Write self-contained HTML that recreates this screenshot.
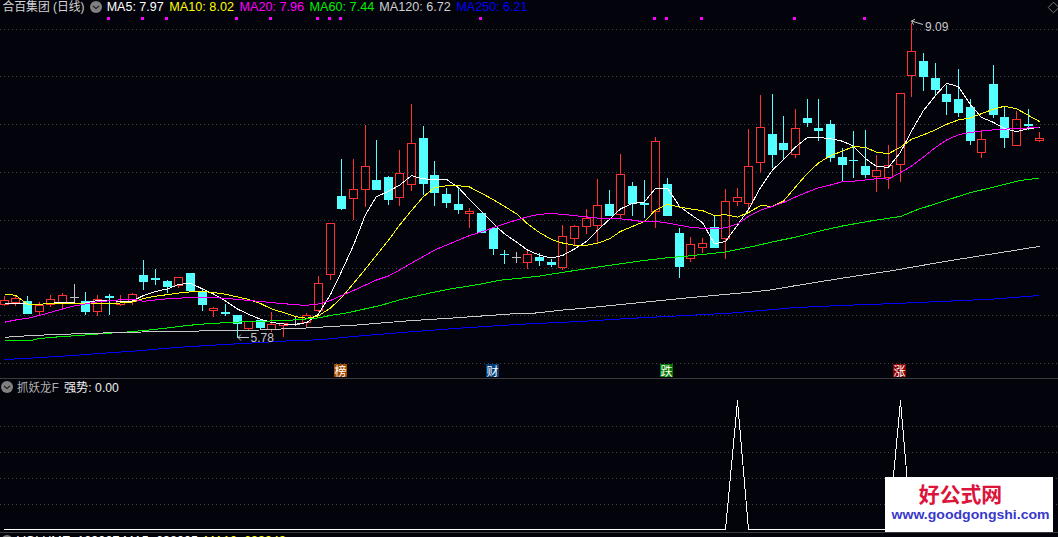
<!DOCTYPE html>
<html lang="zh-CN"><head><meta charset="utf-8"><title>合百集团 (日线)</title>
<style>
html,body{margin:0;padding:0;background:#03030b;}
body{width:1058px;height:537px;overflow:hidden;position:relative;font-family:"Liberation Sans","Noto Sans CJK SC",sans-serif;}
</style></head><body>
<svg width="1058" height="537" viewBox="0 0 1058 537" style="position:absolute;left:0;top:0;display:block">
<rect x="0" y="0" width="1058" height="537" fill="#03030b"/>
<g stroke="#444444" stroke-width="1" stroke-dasharray="1 3" shape-rendering="crispEdges">
<line x1="0" y1="29.5" x2="1058" y2="29.5"/>
<line x1="0" y1="76.5" x2="1058" y2="76.5"/>
<line x1="0" y1="124.5" x2="1058" y2="124.5"/>
<line x1="0" y1="172.5" x2="1058" y2="172.5"/>
<line x1="0" y1="220.5" x2="1058" y2="220.5"/>
<line x1="0" y1="268.5" x2="1058" y2="268.5"/>
<line x1="0" y1="315.5" x2="1058" y2="315.5"/>
<line x1="0" y1="363.5" x2="1058" y2="363.5"/>
<line x1="0" y1="426.5" x2="1058" y2="426.5"/>
<line x1="0" y1="452.5" x2="1058" y2="452.5"/>
<line x1="0" y1="478.5" x2="1058" y2="478.5"/>
<line x1="0" y1="504.5" x2="1058" y2="504.5"/>
</g>
<g shape-rendering="crispEdges" fill="#3c3c3c"><rect x="0" y="378" width="1058" height="1"/><rect x="0" y="532" width="1058" height="1"/></g>
<g shape-rendering="crispEdges">
<rect x="4" y="296" width="1" height="4" fill="#ff3232"/>
<rect x="4" y="305" width="1" height="1" fill="#ff3232"/>
<rect x="0.5" y="300.5" width="8" height="4" fill="none" stroke="#ff3232" stroke-width="1"/>
<rect x="15" y="296" width="1" height="2" fill="#ff3232"/>
<rect x="15" y="303" width="1" height="3" fill="#ff3232"/>
<rect x="11.5" y="298.5" width="8" height="4" fill="none" stroke="#ff3232" stroke-width="1"/>
<rect x="27" y="296" width="1" height="18" fill="#54ffff"/>
<rect x="23" y="301" width="9" height="13" fill="#54ffff"/>
<rect x="39" y="302" width="1" height="3" fill="#ff3232"/>
<rect x="39" y="312" width="1" height="4" fill="#ff3232"/>
<rect x="35.5" y="305.5" width="8" height="6" fill="none" stroke="#ff3232" stroke-width="1"/>
<rect x="50" y="295" width="1" height="4" fill="#ff3232"/>
<rect x="50" y="305" width="1" height="2" fill="#ff3232"/>
<rect x="46.5" y="299.5" width="8" height="5" fill="none" stroke="#ff3232" stroke-width="1"/>
<rect x="62" y="293" width="1" height="2" fill="#ff3232"/>
<rect x="62" y="303" width="1" height="5" fill="#ff3232"/>
<rect x="58.5" y="295.5" width="8" height="7" fill="none" stroke="#ff3232" stroke-width="1"/>
<rect x="74" y="284" width="1" height="18" fill="#c0c0c0"/>
<rect x="70" y="297" width="9" height="1" fill="#c0c0c0"/>
<rect x="85" y="292" width="1" height="23" fill="#54ffff"/>
<rect x="81" y="301" width="9" height="11" fill="#54ffff"/>
<rect x="97" y="295" width="1" height="4" fill="#ff3232"/>
<rect x="97" y="312" width="1" height="4" fill="#ff3232"/>
<rect x="93.5" y="299.5" width="8" height="12" fill="none" stroke="#ff3232" stroke-width="1"/>
<rect x="109" y="294" width="1" height="21" fill="#54ffff"/>
<rect x="105" y="296" width="9" height="2" fill="#54ffff"/>
<rect x="120" y="295" width="1" height="6" fill="#ff3232"/>
<rect x="120" y="305" width="1" height="1" fill="#ff3232"/>
<rect x="116.5" y="301.5" width="8" height="3" fill="none" stroke="#ff3232" stroke-width="1"/>
<rect x="132" y="293" width="1" height="1" fill="#ff3232"/>
<rect x="132" y="302" width="1" height="3" fill="#ff3232"/>
<rect x="128.5" y="294.5" width="8" height="7" fill="none" stroke="#ff3232" stroke-width="1"/>
<rect x="143" y="260" width="1" height="30" fill="#54ffff"/>
<rect x="139" y="275" width="9" height="7" fill="#54ffff"/>
<rect x="155" y="269" width="1" height="16" fill="#54ffff"/>
<rect x="151" y="278" width="9" height="2" fill="#54ffff"/>
<rect x="167" y="280" width="1" height="13" fill="#54ffff"/>
<rect x="163" y="281" width="9" height="6" fill="#54ffff"/>
<rect x="178" y="286" width="1" height="2" fill="#ff3232"/>
<rect x="174.5" y="277.5" width="8" height="8" fill="none" stroke="#ff3232" stroke-width="1"/>
<rect x="190" y="273" width="1" height="19" fill="#54ffff"/>
<rect x="186" y="273" width="9" height="18" fill="#54ffff"/>
<rect x="202" y="289" width="1" height="22" fill="#54ffff"/>
<rect x="198" y="292" width="9" height="13" fill="#54ffff"/>
<rect x="213" y="307" width="1" height="1" fill="#ff3232"/>
<rect x="213" y="311" width="1" height="6" fill="#ff3232"/>
<rect x="209.5" y="308.5" width="8" height="2" fill="none" stroke="#ff3232" stroke-width="1"/>
<rect x="225" y="304" width="1" height="12" fill="#54ffff"/>
<rect x="221" y="312" width="9" height="2" fill="#54ffff"/>
<rect x="237" y="315" width="1" height="23" fill="#54ffff"/>
<rect x="233" y="315" width="9" height="9" fill="#54ffff"/>
<rect x="248" y="329" width="1" height="1" fill="#ff3232"/>
<rect x="244.5" y="321.5" width="8" height="7" fill="none" stroke="#ff3232" stroke-width="1"/>
<rect x="260" y="320" width="1" height="9" fill="#54ffff"/>
<rect x="256" y="320" width="9" height="8" fill="#54ffff"/>
<rect x="271" y="312" width="1" height="12" fill="#ff3232"/>
<rect x="271" y="330" width="1" height="2" fill="#ff3232"/>
<rect x="267.5" y="324.5" width="8" height="5" fill="none" stroke="#ff3232" stroke-width="1"/>
<rect x="283" y="326" width="1" height="11" fill="#ff3232"/>
<rect x="279.5" y="323.5" width="8" height="2" fill="none" stroke="#ff3232" stroke-width="1"/>
<rect x="295" y="316" width="1" height="10" fill="#c0c0c0"/>
<rect x="291" y="324" width="9" height="1" fill="#c0c0c0"/>
<rect x="306" y="313" width="1" height="2" fill="#ff3232"/>
<rect x="306" y="323" width="1" height="5" fill="#ff3232"/>
<rect x="302.5" y="315.5" width="8" height="7" fill="none" stroke="#ff3232" stroke-width="1"/>
<rect x="318" y="276" width="1" height="7" fill="#ff3232"/>
<rect x="318" y="311" width="1" height="1" fill="#ff3232"/>
<rect x="314.5" y="283.5" width="8" height="27" fill="none" stroke="#ff3232" stroke-width="1"/>
<rect x="330" y="275" width="1" height="5" fill="#ff3232"/>
<rect x="326.5" y="223.5" width="8" height="51" fill="none" stroke="#ff3232" stroke-width="1"/>
<rect x="341" y="159" width="1" height="51" fill="#54ffff"/>
<rect x="337" y="196" width="9" height="13" fill="#54ffff"/>
<rect x="353" y="159" width="1" height="30" fill="#ff3232"/>
<rect x="353" y="199" width="1" height="21" fill="#ff3232"/>
<rect x="349.5" y="189.5" width="8" height="9" fill="none" stroke="#ff3232" stroke-width="1"/>
<rect x="365" y="125" width="1" height="41" fill="#ff3232"/>
<rect x="365" y="190" width="1" height="17" fill="#ff3232"/>
<rect x="361.5" y="166.5" width="8" height="23" fill="none" stroke="#ff3232" stroke-width="1"/>
<rect x="376" y="140" width="1" height="50" fill="#54ffff"/>
<rect x="372" y="180" width="9" height="10" fill="#54ffff"/>
<rect x="388" y="176" width="1" height="29" fill="#54ffff"/>
<rect x="384" y="177" width="9" height="23" fill="#54ffff"/>
<rect x="399" y="150" width="1" height="23" fill="#ff3232"/>
<rect x="399" y="198" width="1" height="8" fill="#ff3232"/>
<rect x="395.5" y="173.5" width="8" height="24" fill="none" stroke="#ff3232" stroke-width="1"/>
<rect x="411" y="104" width="1" height="39" fill="#ff3232"/>
<rect x="411" y="185" width="1" height="6" fill="#ff3232"/>
<rect x="407.5" y="143.5" width="8" height="41" fill="none" stroke="#ff3232" stroke-width="1"/>
<rect x="423" y="126" width="1" height="69" fill="#54ffff"/>
<rect x="419" y="138" width="9" height="46" fill="#54ffff"/>
<rect x="434" y="161" width="1" height="45" fill="#54ffff"/>
<rect x="430" y="175" width="9" height="18" fill="#54ffff"/>
<rect x="446" y="188" width="1" height="20" fill="#54ffff"/>
<rect x="442" y="194" width="9" height="9" fill="#54ffff"/>
<rect x="458" y="188" width="1" height="26" fill="#54ffff"/>
<rect x="454" y="204" width="9" height="6" fill="#54ffff"/>
<rect x="469" y="208" width="1" height="3" fill="#ff3232"/>
<rect x="469" y="214" width="1" height="14" fill="#ff3232"/>
<rect x="465.5" y="211.5" width="8" height="2" fill="none" stroke="#ff3232" stroke-width="1"/>
<rect x="481" y="213" width="1" height="20" fill="#54ffff"/>
<rect x="477" y="213" width="9" height="20" fill="#54ffff"/>
<rect x="493" y="228" width="1" height="27" fill="#54ffff"/>
<rect x="489" y="228" width="9" height="21" fill="#54ffff"/>
<rect x="504" y="250" width="1" height="14" fill="#54ffff"/>
<rect x="500" y="254" width="9" height="1" fill="#54ffff"/>
<rect x="516" y="252" width="1" height="11" fill="#c0c0c0"/>
<rect x="512" y="257" width="9" height="1" fill="#c0c0c0"/>
<rect x="527" y="251" width="1" height="3" fill="#ff3232"/>
<rect x="527" y="263" width="1" height="6" fill="#ff3232"/>
<rect x="523.5" y="254.5" width="8" height="8" fill="none" stroke="#ff3232" stroke-width="1"/>
<rect x="539" y="253" width="1" height="13" fill="#54ffff"/>
<rect x="535" y="257" width="9" height="4" fill="#54ffff"/>
<rect x="551" y="259" width="1" height="8" fill="#54ffff"/>
<rect x="547" y="262" width="9" height="3" fill="#54ffff"/>
<rect x="562" y="225" width="1" height="11" fill="#ff3232"/>
<rect x="562" y="268" width="1" height="2" fill="#ff3232"/>
<rect x="558.5" y="236.5" width="8" height="31" fill="none" stroke="#ff3232" stroke-width="1"/>
<rect x="574" y="225" width="1" height="1" fill="#ff3232"/>
<rect x="574" y="239" width="1" height="6" fill="#ff3232"/>
<rect x="570.5" y="226.5" width="8" height="12" fill="none" stroke="#ff3232" stroke-width="1"/>
<rect x="586" y="209" width="1" height="9" fill="#ff3232"/>
<rect x="586" y="227" width="1" height="7" fill="#ff3232"/>
<rect x="582.5" y="218.5" width="8" height="8" fill="none" stroke="#ff3232" stroke-width="1"/>
<rect x="597" y="179" width="1" height="26" fill="#ff3232"/>
<rect x="597" y="226" width="1" height="17" fill="#ff3232"/>
<rect x="593.5" y="205.5" width="8" height="20" fill="none" stroke="#ff3232" stroke-width="1"/>
<rect x="609" y="190" width="1" height="26" fill="#54ffff"/>
<rect x="605" y="204" width="9" height="12" fill="#54ffff"/>
<rect x="620" y="154" width="1" height="20" fill="#ff3232"/>
<rect x="620" y="215" width="1" height="4" fill="#ff3232"/>
<rect x="616.5" y="174.5" width="8" height="40" fill="none" stroke="#ff3232" stroke-width="1"/>
<rect x="632" y="182" width="1" height="34" fill="#54ffff"/>
<rect x="628" y="186" width="9" height="18" fill="#54ffff"/>
<rect x="644" y="180" width="1" height="38" fill="#54ffff"/>
<rect x="640" y="203" width="9" height="2" fill="#54ffff"/>
<rect x="655" y="137" width="1" height="4" fill="#ff3232"/>
<rect x="655" y="212" width="1" height="16" fill="#ff3232"/>
<rect x="651.5" y="141.5" width="8" height="70" fill="none" stroke="#ff3232" stroke-width="1"/>
<rect x="667" y="178" width="1" height="38" fill="#54ffff"/>
<rect x="663" y="184" width="9" height="32" fill="#54ffff"/>
<rect x="679" y="228" width="1" height="50" fill="#54ffff"/>
<rect x="675" y="233" width="9" height="34" fill="#54ffff"/>
<rect x="690" y="237" width="1" height="7" fill="#ff3232"/>
<rect x="690" y="259" width="1" height="3" fill="#ff3232"/>
<rect x="686.5" y="244.5" width="8" height="14" fill="none" stroke="#ff3232" stroke-width="1"/>
<rect x="702" y="238" width="1" height="5" fill="#ff3232"/>
<rect x="702" y="248" width="1" height="5" fill="#ff3232"/>
<rect x="698.5" y="243.5" width="8" height="4" fill="none" stroke="#ff3232" stroke-width="1"/>
<rect x="714" y="216" width="1" height="32" fill="#54ffff"/>
<rect x="710" y="227" width="9" height="21" fill="#54ffff"/>
<rect x="725" y="189" width="1" height="12" fill="#ff3232"/>
<rect x="725" y="239" width="1" height="20" fill="#ff3232"/>
<rect x="721.5" y="201.5" width="8" height="37" fill="none" stroke="#ff3232" stroke-width="1"/>
<rect x="737" y="188" width="1" height="9" fill="#ff3232"/>
<rect x="737" y="202" width="1" height="4" fill="#ff3232"/>
<rect x="733.5" y="197.5" width="8" height="4" fill="none" stroke="#ff3232" stroke-width="1"/>
<rect x="748" y="129" width="1" height="37" fill="#ff3232"/>
<rect x="748" y="204" width="1" height="7" fill="#ff3232"/>
<rect x="744.5" y="166.5" width="8" height="37" fill="none" stroke="#ff3232" stroke-width="1"/>
<rect x="760" y="95" width="1" height="32" fill="#ff3232"/>
<rect x="760" y="163" width="1" height="10" fill="#ff3232"/>
<rect x="756.5" y="127.5" width="8" height="35" fill="none" stroke="#ff3232" stroke-width="1"/>
<rect x="772" y="94" width="1" height="74" fill="#54ffff"/>
<rect x="768" y="134" width="9" height="21" fill="#54ffff"/>
<rect x="783" y="116" width="1" height="44" fill="#54ffff"/>
<rect x="779" y="143" width="9" height="7" fill="#54ffff"/>
<rect x="795" y="109" width="1" height="19" fill="#ff3232"/>
<rect x="795" y="155" width="1" height="3" fill="#ff3232"/>
<rect x="791.5" y="128.5" width="8" height="26" fill="none" stroke="#ff3232" stroke-width="1"/>
<rect x="807" y="99" width="1" height="28" fill="#54ffff"/>
<rect x="803" y="118" width="9" height="5" fill="#54ffff"/>
<rect x="818" y="99" width="1" height="42" fill="#54ffff"/>
<rect x="814" y="128" width="9" height="3" fill="#54ffff"/>
<rect x="830" y="120" width="1" height="42" fill="#54ffff"/>
<rect x="826" y="124" width="9" height="34" fill="#54ffff"/>
<rect x="842" y="148" width="1" height="34" fill="#54ffff"/>
<rect x="838" y="157" width="9" height="8" fill="#54ffff"/>
<rect x="853" y="131" width="1" height="47" fill="#54ffff"/>
<rect x="849" y="160" width="9" height="1" fill="#54ffff"/>
<rect x="865" y="130" width="1" height="48" fill="#54ffff"/>
<rect x="861" y="166" width="9" height="9" fill="#54ffff"/>
<rect x="876" y="155" width="1" height="15" fill="#ff3232"/>
<rect x="876" y="177" width="1" height="15" fill="#ff3232"/>
<rect x="872.5" y="170.5" width="8" height="6" fill="none" stroke="#ff3232" stroke-width="1"/>
<rect x="888" y="145" width="1" height="20" fill="#ff3232"/>
<rect x="888" y="178" width="1" height="11" fill="#ff3232"/>
<rect x="884.5" y="165.5" width="8" height="12" fill="none" stroke="#ff3232" stroke-width="1"/>
<rect x="900" y="165" width="1" height="17" fill="#ff3232"/>
<rect x="896.5" y="93.5" width="8" height="71" fill="none" stroke="#ff3232" stroke-width="1"/>
<rect x="911" y="23" width="1" height="28" fill="#ff3232"/>
<rect x="911" y="76" width="1" height="21" fill="#ff3232"/>
<rect x="907.5" y="51.5" width="8" height="24" fill="none" stroke="#ff3232" stroke-width="1"/>
<rect x="923" y="53" width="1" height="38" fill="#54ffff"/>
<rect x="919" y="61" width="9" height="16" fill="#54ffff"/>
<rect x="935" y="63" width="1" height="33" fill="#54ffff"/>
<rect x="931" y="78" width="9" height="12" fill="#54ffff"/>
<rect x="946" y="85" width="1" height="30" fill="#54ffff"/>
<rect x="942" y="94" width="9" height="8" fill="#54ffff"/>
<rect x="958" y="69" width="1" height="48" fill="#54ffff"/>
<rect x="954" y="99" width="9" height="14" fill="#54ffff"/>
<rect x="970" y="99" width="1" height="46" fill="#54ffff"/>
<rect x="966" y="107" width="9" height="34" fill="#54ffff"/>
<rect x="981" y="130" width="1" height="9" fill="#ff3232"/>
<rect x="981" y="153" width="1" height="5" fill="#ff3232"/>
<rect x="977.5" y="139.5" width="8" height="13" fill="none" stroke="#ff3232" stroke-width="1"/>
<rect x="993" y="65" width="1" height="53" fill="#54ffff"/>
<rect x="989" y="84" width="9" height="31" fill="#54ffff"/>
<rect x="1004" y="107" width="1" height="41" fill="#54ffff"/>
<rect x="1000" y="117" width="9" height="21" fill="#54ffff"/>
<rect x="1016" y="111" width="1" height="8" fill="#ff3232"/>
<rect x="1012.5" y="119.5" width="8" height="26" fill="none" stroke="#ff3232" stroke-width="1"/>
<rect x="1028" y="109" width="1" height="21" fill="#54ffff"/>
<rect x="1024" y="124" width="9" height="2" fill="#54ffff"/>
<rect x="1039" y="132" width="1" height="6" fill="#ff3232"/>
<rect x="1039" y="141" width="1" height="1" fill="#ff3232"/>
<rect x="1035.5" y="138.5" width="8" height="2" fill="none" stroke="#ff3232" stroke-width="1"/>
</g>
<polyline points="4.5,303.0 15.5,303.0 27.5,304.0 39.5,304.3 50.5,303.3 62.5,302.4 74.5,303.0 85.5,303.0 97.5,300.4 109.5,300.4 120.5,301.4 132.5,301.0 143.5,295.5 155.5,291.5 167.5,288.9 178.5,284.5 190.5,283.3 202.5,288.9 213.5,294.0 225.5,300.9 237.5,309.0 248.5,314.3 260.5,319.2 271.5,322.4 283.5,324.0 295.5,324.2 306.5,322.7 318.5,313.9 330.5,294.5 341.5,271.5 353.5,245.3 365.5,214.6 376.5,196.5 388.5,191.5 399.5,185.2 411.5,175.7 423.5,178.9 434.5,179.4 446.5,179.4 458.5,187.6 469.5,199.5 481.5,211.4 493.5,223.8 504.5,233.9 516.5,241.9 527.5,250.1 539.5,255.2 551.5,258.0 562.5,255.5 574.5,249.0 586.5,241.4 597.5,230.2 609.5,219.4 620.5,208.9 632.5,203.4 644.5,201.9 655.5,188.3 667.5,188.3 679.5,206.4 690.5,214.4 702.5,222.6 714.5,243.9 725.5,241.4 737.5,225.2 748.5,209.4 760.5,187.6 772.5,170.0 783.5,159.7 795.5,147.0 807.5,137.4 818.5,137.4 830.5,138.7 842.5,141.2 853.5,146.2 865.5,158.6 876.5,166.5 888.5,167.3 900.5,152.3 911.5,131.0 923.5,110.5 935.5,95.5 946.5,83.2 958.5,86.7 970.5,104.9 981.5,117.4 993.5,122.4 1004.5,128.6 1016.5,131.6 1028.5,128.6 1039.5,127.4" fill="none" stroke="#ffffff" stroke-width="1" stroke-linejoin="round" shape-rendering="crispEdges"/>
<polyline points="4.5,294.0 15.5,295.3 27.5,304.2 39.5,304.4 50.5,303.2 62.5,303.2 74.5,303.2 85.5,303.2 97.5,303.2 109.5,303.2 120.5,303.0 132.5,302.0 143.5,298.4 155.5,296.2 167.5,294.6 178.5,293.1 190.5,291.8 202.5,291.5 213.5,292.5 225.5,294.3 237.5,296.9 248.5,299.4 260.5,303.5 271.5,308.9 283.5,312.6 295.5,316.6 306.5,318.3 318.5,315.8 330.5,308.0 341.5,297.7 353.5,283.5 365.5,268.9 376.5,255.2 388.5,240.2 399.5,225.2 411.5,210.5 423.5,196.5 434.5,187.7 446.5,185.7 458.5,185.7 469.5,187.0 481.5,193.2 493.5,199.8 504.5,206.4 516.5,213.8 527.5,223.8 539.5,232.6 551.5,239.5 562.5,243.0 574.5,245.2 586.5,245.2 597.5,243.2 609.5,238.9 620.5,231.4 632.5,226.4 644.5,221.4 655.5,210.1 667.5,204.4 679.5,207.1 690.5,208.9 702.5,210.6 714.5,215.6 725.5,214.6 737.5,217.1 748.5,212.6 760.5,205.6 772.5,206.4 783.5,201.0 795.5,187.0 807.5,173.2 818.5,163.0 830.5,155.6 842.5,151.1 853.5,146.6 865.5,147.3 876.5,152.3 888.5,153.6 900.5,147.3 911.5,139.3 923.5,134.8 935.5,129.9 946.5,124.4 958.5,119.9 970.5,117.9 981.5,113.6 993.5,109.2 1004.5,106.2 1016.5,108.7 1028.5,115.4 1039.5,121.6" fill="none" stroke="#ffff00" stroke-width="1" stroke-linejoin="round" shape-rendering="crispEdges"/>
<polyline points="4.5,322.2 15.5,320.0 27.5,318.3 39.5,315.5 50.5,312.4 62.5,309.0 74.5,305.9 85.5,304.0 97.5,302.0 109.5,300.8 120.5,299.8 132.5,299.2 143.5,301.3 155.5,300.0 167.5,298.8 178.5,298.2 190.5,297.6 202.5,297.6 213.5,297.6 225.5,298.4 237.5,299.4 248.5,300.5 260.5,301.5 271.5,302.6 283.5,303.6 295.5,304.8 306.5,305.3 318.5,304.0 330.5,300.5 341.5,295.5 353.5,290.5 365.5,285.0 376.5,280.0 388.5,276.0 399.5,270.0 411.5,263.2 423.5,256.4 434.5,250.1 446.5,245.1 458.5,240.1 469.5,235.6 481.5,231.9 493.5,227.6 504.5,223.8 516.5,220.1 527.5,216.8 539.5,214.3 551.5,213.5 562.5,214.3 574.5,215.6 586.5,216.9 597.5,218.1 609.5,218.9 620.5,218.9 632.5,220.1 644.5,221.9 655.5,221.4 667.5,223.1 679.5,225.2 690.5,227.2 702.5,228.4 714.5,228.9 725.5,227.7 737.5,223.9 748.5,216.4 760.5,210.1 772.5,206.4 783.5,202.5 795.5,197.0 807.5,192.0 818.5,187.8 830.5,185.0 842.5,181.6 853.5,181.2 865.5,180.0 876.5,178.7 888.5,179.1 900.5,172.6 911.5,166.0 923.5,157.0 935.5,147.5 946.5,140.0 958.5,134.8 970.5,132.4 981.5,131.1 993.5,129.9 1004.5,129.1 1016.5,128.6 1028.5,127.9 1039.5,127.4" fill="none" stroke="#ff00ff" stroke-width="1" stroke-linejoin="round" shape-rendering="crispEdges"/>
<polyline points="4.5,340.0 33.0,340.0 39.0,338.6 51.0,337.4 68.0,336.2 85.0,335.0 97.0,334.1 109.0,333.2 127.0,332.0 149.0,330.0 161.0,328.7 178.0,326.6 198.0,324.4 220.0,323.0 236.0,322.1 260.6,321.4 295.6,319.9 318.4,317.9 330.4,315.4 343.8,313.5 355.6,311.0 380.7,305.4 400.2,299.7 431.0,292.8 450.3,289.0 481.3,284.0 500.4,280.2 520.0,278.2 540.0,276.0 565.0,272.0 590.0,268.2 640.0,261.0 665.0,258.0 690.0,255.8 725.0,252.0 753.0,246.4 778.0,240.7 793.0,237.7 818.0,231.4 843.0,225.9 868.0,221.4 900.7,216.4 918.3,209.3 943.3,201.3 968.0,193.3 993.4,187.1 1018.5,180.8 1039.5,178.0" fill="none" stroke="#00f000" stroke-width="1" stroke-linejoin="round" shape-rendering="crispEdges"/>
<polyline points="4.5,337.3 22.0,336.1 44.0,335.0 68.0,334.1 96.0,333.2 142.0,332.0 190.0,331.2 229.0,330.4 260.0,330.0 288.0,328.7 306.5,328.0 355.6,325.1 405.9,321.0 456.0,317.8 510.0,314.0 530.0,313.6 565.0,309.8 580.0,308.6 630.0,303.6 680.0,298.6 730.0,294.0 750.0,292.2 768.7,290.2 793.0,286.1 843.0,278.0 893.0,270.5 943.0,261.8 993.0,253.8 1039.5,246.4" fill="none" stroke="#c8c8c8" stroke-width="1" stroke-linejoin="round" shape-rendering="crispEdges"/>
<polyline points="4.5,359.5 39.0,357.7 74.0,355.4 97.0,353.6 132.0,351.3 155.0,349.3 178.0,347.3 213.0,345.2 240.0,343.7 260.0,342.5 288.0,340.9 305.0,340.6 326.0,339.1 358.0,336.1 405.9,332.2 456.0,328.4 520.0,324.3 530.0,323.8 580.0,321.5 630.0,318.4 680.0,315.8 730.0,313.2 795.0,307.6 843.0,305.4 893.0,303.6 943.0,301.4 993.0,299.1 1039.5,295.5" fill="none" stroke="#0000ff" stroke-width="1" stroke-linejoin="round" shape-rendering="crispEdges"/>
<g fill="#ff00ff" shape-rendering="crispEdges">
<rect x="107" y="17" width="3" height="3"/>
<rect x="141" y="17" width="3" height="3"/>
<rect x="165" y="17" width="3" height="3"/>
<rect x="235" y="17" width="3" height="3"/>
<rect x="269" y="17" width="3" height="3"/>
<rect x="316" y="17" width="3" height="3"/>
<rect x="328" y="17" width="3" height="3"/>
<rect x="339" y="17" width="3" height="3"/>
<rect x="479" y="17" width="3" height="3"/>
<rect x="653" y="17" width="3" height="3"/>
<rect x="665" y="17" width="3" height="3"/>
<rect x="700" y="17" width="3" height="3"/>
<rect x="793" y="17" width="3" height="3"/>
<rect x="863" y="17" width="3" height="3"/>
</g>
<polyline points="4.0,529.5 725.5,529.5 737.5,401.0 748.5,529.5 888.5,529.5 900.5,401.0 911.5,529.5 1039.5,529.5" fill="none" stroke="#ffffff" stroke-width="1" stroke-linejoin="round" shape-rendering="crispEdges"/>
<rect x="334" y="364" width="13" height="13" fill="#a04a00" shape-rendering="crispEdges"/>
<text x="340.5" y="375.7" font-family="Liberation Sans, Noto Sans CJK SC, sans-serif" font-size="12" fill="#fff" text-anchor="middle">榜</text>
<rect x="486" y="364" width="13" height="13" fill="#003c78" shape-rendering="crispEdges"/>
<text x="492.5" y="375.7" font-family="Liberation Sans, Noto Sans CJK SC, sans-serif" font-size="12" fill="#fff" text-anchor="middle">财</text>
<rect x="660" y="364" width="13" height="13" fill="#007800" shape-rendering="crispEdges"/>
<text x="666.5" y="375.7" font-family="Liberation Sans, Noto Sans CJK SC, sans-serif" font-size="12" fill="#fff" text-anchor="middle">跌</text>
<rect x="893" y="364" width="13" height="13" fill="#8b0000" shape-rendering="crispEdges"/>
<text x="899.5" y="375.7" font-family="Liberation Sans, Noto Sans CJK SC, sans-serif" font-size="12" fill="#fff" text-anchor="middle">涨</text>
<g stroke="#c8c8c8" stroke-width="1" fill="none"><path d="M911.5 21 L923 24.5 M915 19.3 L911.5 21 L913.5 24.6"/><path d="M238 337.5 L249 337.5 M241 334.5 L238 337.5 L241 340.5"/></g>
<text x="925" y="30.6" font-family="Liberation Sans, Noto Sans CJK SC, sans-serif" font-size="12" fill="#c8c8c8">9.09</text>
<text x="250.5" y="341.6" font-family="Liberation Sans, Noto Sans CJK SC, sans-serif" font-size="12" fill="#c8c8c8">5.78</text>
<text x="2.5" y="11" font-family="Liberation Sans, Noto Sans CJK SC, sans-serif" font-size="12" fill="#d4d4d4" textLength="82" lengthAdjust="spacingAndGlyphs">合百集团 (日线)</text>
<circle cx="96" cy="7" r="6" fill="#808080"/><path d="M93 5.8 L96 8.6 L99 5.8" stroke="#101018" stroke-width="1.1" fill="none"/>
<text x="106.7" y="10.6" font-family="Liberation Sans, Noto Sans CJK SC, sans-serif" font-size="12" fill="#ffffff" textLength="57" lengthAdjust="spacingAndGlyphs">MA5: 7.97</text>
<text x="169.3" y="10.6" font-family="Liberation Sans, Noto Sans CJK SC, sans-serif" font-size="12" fill="#ffff00" textLength="64.7" lengthAdjust="spacingAndGlyphs">MA10: 8.02</text>
<text x="239.5" y="10.6" font-family="Liberation Sans, Noto Sans CJK SC, sans-serif" font-size="12" fill="#ff00ff" textLength="64.6" lengthAdjust="spacingAndGlyphs">MA20: 7.96</text>
<text x="309.6" y="10.6" font-family="Liberation Sans, Noto Sans CJK SC, sans-serif" font-size="12" fill="#00f000" textLength="64.6" lengthAdjust="spacingAndGlyphs">MA60: 7.44</text>
<text x="379.3" y="10.6" font-family="Liberation Sans, Noto Sans CJK SC, sans-serif" font-size="12" fill="#d0d0d0" textLength="71.6" lengthAdjust="spacingAndGlyphs">MA120: 6.72</text>
<text x="456.4" y="10.6" font-family="Liberation Sans, Noto Sans CJK SC, sans-serif" font-size="12" fill="#0000ff" textLength="71.1" lengthAdjust="spacingAndGlyphs">MA250: 6.21</text>
<path d="M1048.2 7.5 L1053.5 2.2 L1058.8 7.5 L1053.5 12.8 Z" stroke="#787878" stroke-width="1" fill="none"/>
<circle cx="7" cy="387" r="6" fill="#808080"/><path d="M4 385.8 L7 388.6 L10 385.8" stroke="#101018" stroke-width="1.1" fill="none"/>
<text x="17" y="391.6" font-family="Liberation Sans, Noto Sans CJK SC, sans-serif" font-size="12" fill="#b0b0b0" textLength="41.7" lengthAdjust="spacingAndGlyphs">抓妖龙F</text>
<text x="63.9" y="391.6" font-family="Liberation Sans, Noto Sans CJK SC, sans-serif" font-size="12" fill="#f0f0f0" textLength="55" lengthAdjust="spacingAndGlyphs">强势: 0.00</text>
<circle cx="7" cy="541" r="6" fill="#808080"/>
<text x="17" y="545" font-family="Liberation Sans, Noto Sans CJK SC, sans-serif" font-size="12" fill="#ffffff" textLength="181" lengthAdjust="spacingAndGlyphs">VOLUME: 123007 MA5: 638005</text>
<text x="204" y="545" font-family="Liberation Sans, Noto Sans CJK SC, sans-serif" font-size="12" fill="#ffff00" textLength="82" lengthAdjust="spacingAndGlyphs">MA10: 633943</text>
<rect x="885" y="477" width="168" height="55" fill="#ffffff" shape-rendering="crispEdges"/>
<text x="960.5" y="502.3" font-family="Liberation Sans, Noto Sans CJK SC, sans-serif" font-size="21" font-weight="bold" fill="#dc143c" text-anchor="middle" textLength="83.4" lengthAdjust="spacingAndGlyphs">好公式网</text>
<text x="891.6" y="519.3" font-family="Liberation Sans, Noto Sans CJK SC, sans-serif" font-size="13" font-weight="bold" fill="#3838c8" textLength="158" lengthAdjust="spacingAndGlyphs">www.goodgongshi.com</text>
</svg>
</body></html>
